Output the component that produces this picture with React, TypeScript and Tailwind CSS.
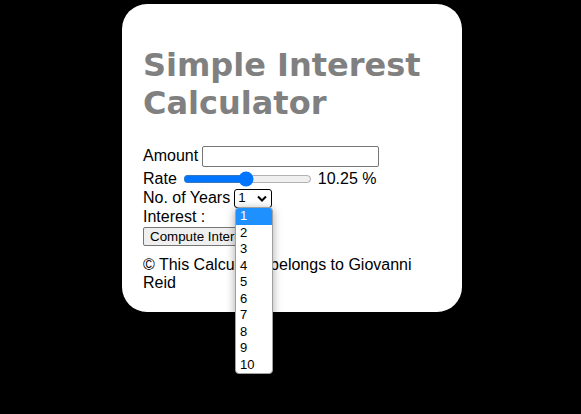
import { useState } from "react";

const YEARS = [1, 2, 3, 4, 5, 6, 7, 8, 9, 10];

export default function App() {
  const [amount, setAmount] = useState("");
  const [rate, setRate] = useState(10.25);
  const [years] = useState(1);

  return (
    <div className="flex min-h-[414px] w-full justify-center bg-black pl-[3px] pt-[4px] font-['Liberation_Sans',Arial,sans-serif] text-[16px] leading-[18.4px] text-black">
      <div className="relative h-[308px] w-[340px] rounded-[25px] bg-white pl-[21px] pr-[20px] pt-[42px]">
        <h1 className="mb-[22px] font-['DejaVu_Sans',Verdana,sans-serif] text-[32px] font-bold leading-[38px] text-[#808080]">
          Simple Interest Calculator
        </h1>

        {/* Amount */}
        <div className="flex h-[24px] items-center">
          <span>Amount</span>
          <input
            type="text"
            value={amount}
            onChange={(e) => setAmount(e.target.value)}
            className="ml-[4px] h-[21px] w-[177px] rounded-[2px] border border-[#767676] px-[2px] text-[13.33px] outline-none"
          />
        </div>

        {/* Rate */}
        <div className="mt-[1px] flex h-[20px] items-center">
          <span>Rate</span>
          <input
            type="range"
            min={1}
            max={20}
            step={0.25}
            value={rate}
            onChange={(e) => setRate(Number(e.target.value))}
            className="mx-[2px] ml-[6px] h-[16px] w-[129px]"
          />
          <span className="ml-[4px]">{rate} %</span>
        </div>

        {/* Years */}
        <div className="flex h-[19px] items-center">
          <span>No. of Years</span>
          <div className="ml-[4px] flex h-[19px] w-[38px] items-center justify-between rounded-[3px] border border-black pl-[3px] pr-[4px] text-[13.33px]">
            <span>{years}</span>
            <svg width="10" height="7" viewBox="0 0 10 7">
              <path d="M1 1.5 L5 5.5 L9 1.5" fill="none" stroke="black" strokeWidth="2" />
            </svg>
          </div>
        </div>

        {/* Interest */}
        <div className="flex h-[18px] items-center">
          <span>Interest :</span>
        </div>

        <button className="mt-[1px] h-[19px] rounded-[2px] border border-[#767676] bg-[#efefef] px-[6px] text-[13.33px] leading-[15px]">
          Compute Interest
        </button>

        <p className="mt-[10px]">© This Calculator belongs to Giovanni Reid</p>

        {/* open select list */}
        <div className="absolute left-[113px] top-[203px] w-[38px] overflow-hidden rounded-[4px] border border-[#a0a0a0] bg-white shadow-[0_2px_10px_rgba(0,0,0,0.35)]">
          {YEARS.map((y) => (
            <div
              key={y}
              className={`h-[16.5px] pl-[4px] text-[13px] leading-[16.5px] ${
                y === years ? "bg-[#1e90ff] text-white" : "text-black"
              }`}
            >
              {y}
            </div>
          ))}
        </div>
      </div>
    </div>
  );
}
